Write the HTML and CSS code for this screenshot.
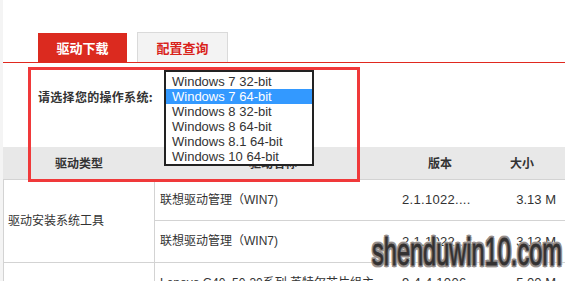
FILE: index.html
```html
<!DOCTYPE html>
<html lang="zh-CN">
<head>
<meta charset="utf-8">
<title>驱动下载</title>
<link rel="stylesheet" href="styles.css">
</head>
<body>
<div class="page">
  <div class="tabs">
    <div class="tab tab-active">驱动下载</div>
    <div class="tab tab-idle">配置查询</div>
  </div>

  <div class="os-row">
    <span class="os-label">请选择您的操作系统:</span>
    <ul class="listbox">
      <li class="opt">Windows 7 32-bit</li>
      <li class="opt opt-selected">Windows 7 64-bit</li>
      <li class="opt">Windows 8 32-bit</li>
      <li class="opt">Windows 8 64-bit</li>
      <li class="opt">Windows 8.1 64-bit</li>
      <li class="opt">Windows 10 64-bit</li>
    </ul>
  </div>

  <table class="drivers">
    <colgroup>
      <col class="c-type">
      <col class="c-name">
      <col class="c-ver">
      <col class="c-size">
    </colgroup>
    <thead>
      <tr>
        <th>驱动类型</th>
        <th>驱动名称</th>
        <th>版本</th>
        <th class="th-size">大小</th>
      </tr>
    </thead>
    <tbody>
      <tr class="r1">
        <td class="type" rowspan="2">驱动安装系统工具</td>
        <td class="name">联想驱动管理（WIN7)</td>
        <td class="ver">2.1.1022....</td>
        <td class="size">3.13 M</td>
      </tr>
      <tr class="r2">
        <td class="name">联想驱动管理（WIN7)</td>
        <td class="ver">2.1.1022....</td>
        <td class="size">3.13 M</td>
      </tr>
      <tr class="r3">
        <td class="type"></td>
        <td class="name">Lenovo G40_50-30系列 英特尔芯片组主</td>
        <td class="ver">9.4.4.1006...</td>
        <td class="size">5.00 M</td>
      </tr>
    </tbody>
  </table>

  <div class="highlight"></div>
  <div class="watermark">shenduwin10.com</div>
</div>
</body>
</html>
```

FILE: styles.css
```css
html, body {
  margin: 0;
  padding: 0;
  background: #ffffff;
}

body {
  font-family: "Liberation Sans", "Noto Sans CJK SC", sans-serif;
  color: #333333;
}

.page {
  position: relative;
  height: 281px;
  overflow: hidden;
  border-left: 3px solid #f4f4f4;
}

/* Tabs */
.tabs {
  display: flex;
  align-items: flex-end;
  gap: 10px;
  height: 30px;
  padding: 32px 0 0 35px;
  border-bottom: 1px solid #e0291f;
}

.tab {
  display: flex;
  align-items: center;
  justify-content: center;
  box-sizing: border-box;
  font-family: "Noto Sans CJK SC", sans-serif;
  font-size: 13px;
  font-weight: bold;
}

.tab-active {
  width: 89px;
  height: 29px;
  background: #db2a1f;
  color: #ffffff;
}

.tab-idle {
  width: 91px;
  height: 30px;
  background: #f3f3f3;
  border: 1px solid #dadada;
  border-bottom: 0;
  color: #d9231b;
}

/* OS selector row */
.os-row {
  position: relative;
  box-sizing: border-box;
  height: 84px;
  padding: 25px 0 0 35px;
}

.os-label {
  font-family: "Noto Sans CJK SC", sans-serif;
  font-size: 12px;
  line-height: 14px;
  font-weight: bold;
  color: #333333;
  letter-spacing: 0.3px;
}

.listbox {
  position: absolute;
  left: 161px;
  top: 7px;
  z-index: 3;
  box-sizing: border-box;
  width: 150px;
  height: 96px;
  margin: 0;
  padding: 2px 0 0;
  list-style: none;
  background: #ffffff;
  border: 2px solid #222222;
}

.opt {
  height: 15px;
  line-height: 15px;
  padding-left: 6px;
  font-family: "Liberation Sans", sans-serif;
  font-size: 13px;
  color: #333333;
  white-space: nowrap;
}

.opt-selected {
  background: #3399ff;
  color: #ffffff;
}

/* Table */
.drivers {
  width: 562px;
  table-layout: fixed;
  border-collapse: separate;
  border-spacing: 0;
}

.c-type { width: 152px; }
.c-name { width: 236px; }
.c-ver  { width: 98px; }
.c-size { width: 76px; }

.drivers th {
  padding: 0;
  line-height: 32px;
  background: #e8e8e8;
  border-bottom: 1px solid #d3d3d3;
  font-family: "Noto Sans CJK SC", sans-serif;
  font-size: 12px;
  font-weight: bold;
  color: #333333;
  text-align: center;
}

.drivers th.th-size {
  padding-right: 10px;
}

.drivers td {
  padding: 0;
  border-bottom: 1px solid #d3d3d3;
  font-size: 12px;
  color: #333333;
  white-space: nowrap;
  overflow: hidden;
}

.r1 td { line-height: 40px; }
.r2 td { line-height: 41px; }
.r3 td { line-height: 40px; }

.drivers td.type {
  padding-left: 4px;
  border-left: 1px solid #d3d3d3;
  border-right: 1px solid #d3d3d3;
  vertical-align: middle;
  line-height: 16px;
}

.drivers td.name {
  padding-left: 5px;
}

.drivers td.ver {
  padding-left: 11px;
  font-size: 13px;
  letter-spacing: 0.3px;
}

.drivers td.size {
  padding-right: 9px;
  text-align: right;
  font-size: 13px;
}

/* Screenshot annotation overlay */
.highlight {
  position: absolute;
  left: 25px;
  top: 67px;
  z-index: 2;
  box-sizing: border-box;
  width: 332px;
  height: 115px;
  border: 3px solid #f0393a;
}

/* Watermark overlay */
.watermark {
  position: absolute;
  left: 369px;
  top: 233px;
  z-index: 4;
  font-family: "Liberation Sans", sans-serif;
  font-size: 38px;
  line-height: 38px;
  color: #333131;
  -webkit-text-stroke: 0.8px #333131;
  white-space: nowrap;
  transform: scaleX(0.62);
  transform-origin: left top;
  text-shadow:
    2px 0 #958e8b, -2px 0 #958e8b, 0 2px #958e8b, 0 -2px #958e8b,
    2px 2px #958e8b, -2px -2px #958e8b, 2px -2px #958e8b, -2px 2px #958e8b,
    3px 0 #d6d2d0, -3px 0 #d6d2d0, 0 3px #d6d2d0, 0 -3px #d6d2d0;
}
```
